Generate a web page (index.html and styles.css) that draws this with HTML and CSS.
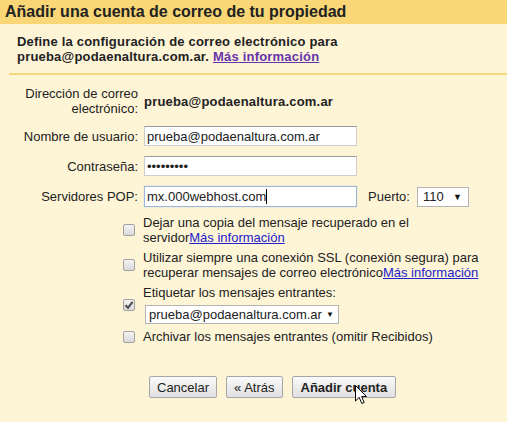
FILE: index.html
```html
<!DOCTYPE html>
<html lang="es">
<head>
    <meta charset="UTF-8">
    <meta name="viewport" content="width=device-width, initial-scale=1.0">
    <title>Añadir una cuenta de correo</title>
    <link rel="stylesheet" href="styles.css">
</head>
<body>

<div class="header">Añadir una cuenta de correo de tu propiedad</div>

<div class="intro">
    Define la configuración de correo electrónico para<br>
    prueba@podaenaltura.com.ar. <a href="#" class="visited">Más información</a>
</div>

<div class="fields">
    <label class="field-label first">Dirección de correo<br>electrónico:</label>
    <div class="address">prueba@podaenaltura.com.ar</div>

    <label class="field-label" for="username">Nombre de usuario:</label>
    <div><input type="text" id="username" class="text-input" value="prueba@podaenaltura.com.ar"></div>

    <label class="field-label" for="password">Contraseña:</label>
    <div><input type="password" id="password" class="text-input" value="123456789"></div>

    <label class="field-label" for="server">Servidores POP:</label>
    <div class="server-row">
        <span class="input-wrap">
            <input type="text" id="server" class="text-input focused" value="mx.000webhost.com">
            <span class="caret"></span>
        </span>
        <label class="port-label">Puerto:</label>
        <div class="fake-select port-select">110</div>
    </div>
</div>

<div class="options">
    <div class="option">
        <span class="check"></span>
        <div class="option-text">Dejar una copia del mensaje recuperado en el<br>servidor<a href="#">Más información</a></div>
    </div>
    <div class="option">
        <span class="check"></span>
        <div class="option-text">Utilizar siempre una conexión SSL (conexión segura) para<br>recuperar mensajes de correo electrónico<a href="#">Más información</a></div>
    </div>
    <div class="option">
        <span class="check checked">
            <svg width="10" height="10" viewBox="0 0 10 10"><path d="M1.5 5.2 L4 7.8 L8.6 1.8" fill="none" stroke="#4a4a4a" stroke-width="2"/></svg>
        </span>
        <div class="option-text">
            Etiquetar los mensajes entrantes:
            <div class="fake-select label-select">prueba@podaenaltura.com.ar</div>
        </div>
    </div>
    <div class="option">
        <span class="check"></span>
        <div class="option-text">Archivar los mensajes entrantes (omitir Recibidos)</div>
    </div>
</div>

<div class="buttons">
    <button>Cancelar</button>
    <button>« Atrás</button>
    <button class="primary">Añadir cuenta</button>
</div>

<svg class="cursor" width="13" height="20" viewBox="0 0 13 20">
    <path d="M0.5 0.5 L0.5 16 L4.2 12.4 L6.8 18.5 L9.2 17.5 L6.6 11.5 L11.5 11.5 Z" fill="#fff" stroke="#000" stroke-width="1"/>
</svg>

</body>
</html>
```

FILE: styles.css
```css
body {
    margin: 0;
    background-color: #fef5d7;
    font-family: "Liberation Sans", Arial, sans-serif;
    font-size: 13px;
    line-height: 15px;
    color: #222;
    height: 422px;
    position: relative;
}

.header {
    background-color: #f9d676;
    height: 24px;
    line-height: 24px;
    padding-left: 5px;
    font-size: 16px;
    font-weight: bold;
    color: #222;
}

.intro {
    margin-left: 9px;
    padding: 10px 0 9px 8px;
    border-bottom: 2px solid #f6d77c;
    font-weight: bold;
    letter-spacing: 0.2px;
}

a {
    color: #2222cc;
}

a.visited {
    color: #6633aa;
}

.fields {
    display: grid;
    grid-template-columns: 130px auto;
    column-gap: 6px;
    row-gap: 10px;
    align-items: center;
    margin: 8px 0 0 8px;
}

.field-label {
    text-align: right;
}

.field-label.first {
    padding-top: 3px;
}

.address {
    font-weight: bold;
    letter-spacing: 0.2px;
    padding-top: 3px;
}

.text-input {
    box-sizing: border-box;
    width: 213px;
    height: 20px;
    padding: 0 2px;
    margin: 0;
    border: 1px solid #cdcdcd;
    border-top-color: #9a9a9a;
    background: #fff;
    font-family: inherit;
    font-size: 13px;
    color: #222;
    outline: none;
}

.text-input.focused {
    border: 1px solid #9bb6d8;
    box-shadow: 0 0 1px #b7cbe6;
    height: 21px;
}

.server-row {
    display: flex;
    align-items: center;
}

.input-wrap {
    position: relative;
    display: flex;
}

.caret {
    position: absolute;
    left: 122px;
    top: 3px;
    width: 1px;
    height: 15px;
    background: #000;
}

.port-label {
    margin-left: 11px;
    margin-right: 7px;
}

.fake-select {
    box-sizing: border-box;
    position: relative;
    height: 19px;
    line-height: 17px;
    background: #fff;
    border: 1px solid #b4b4b4;
    padding-left: 5px;
}

.fake-select::after {
    content: "▼";
    position: absolute;
    right: 6px;
    top: 0;
    font-size: 9px;
    color: #111;
}

.port-select {
    width: 52px;
    height: 20px;
    line-height: 18px;
}

.label-select {
    width: 194px;
    margin: 5px 0 0 2px;
    padding-left: 3px;
}

.label-select::after {
    right: 4px;
    font-size: 8px;
}

.options {
    display: flex;
    flex-direction: column;
    gap: 5px;
    margin: 8px 0 0 123px;
}

.option {
    display: flex;
    align-items: center;
    gap: 8px;
}

.option-text {
    white-space: nowrap;
}

.check {
    box-sizing: border-box;
    width: 12px;
    height: 12px;
    flex-shrink: 0;
    border: 1px solid #a2a2a2;
    border-radius: 2px;
    background: linear-gradient(#f3f3f3, #dadada);
    display: flex;
    align-items: center;
    justify-content: center;
}

.buttons {
    display: flex;
    gap: 9px;
    margin: 32px 0 0 149px;
}

button {
    box-sizing: border-box;
    height: 22px;
    padding: 0 7px;
    border: 1px solid #a6a6a6;
    border-radius: 2px;
    background: linear-gradient(#fafafa, #e0e0e0);
    font-family: inherit;
    font-size: 13px;
    color: #222;
    cursor: pointer;
}

button.primary {
    font-weight: bold;
    padding: 0 8px;
}

.cursor {
    position: absolute;
    left: 355px;
    top: 385px;
}
```
